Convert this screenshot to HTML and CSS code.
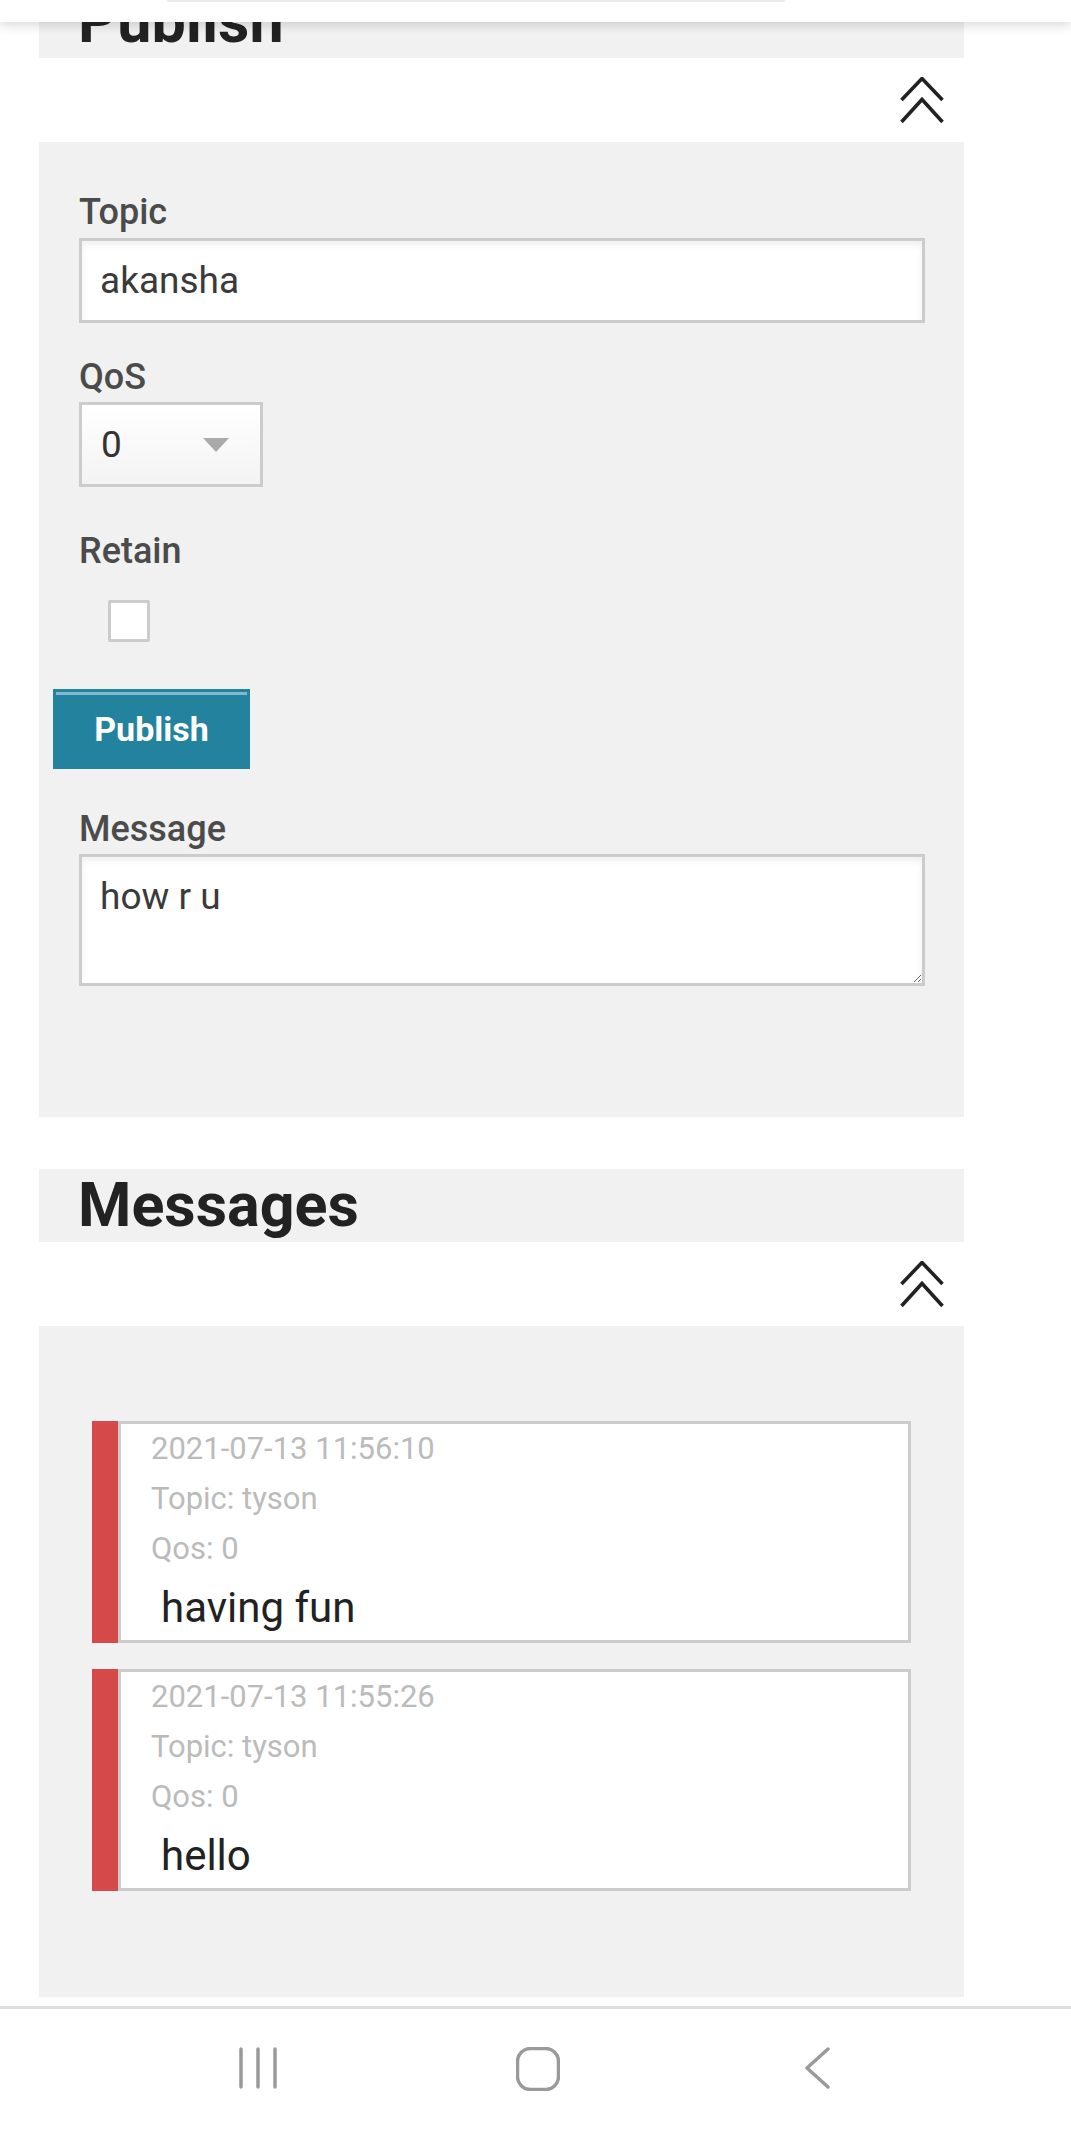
FILE: index.html
```html
<!DOCTYPE html>
<html lang="en">
<head>
<meta charset="utf-8">
<title>MQTT Client</title>
<link rel="stylesheet" href="styles.css">
</head>
<body>
<div class="topbar"><div class="topbar-edge"></div></div>

<main class="page">
  <section class="panel panel-first">
    <div class="panel-head"><h2>Publish</h2></div>
    <div class="collapse-row">
      <svg class="chev" width="44" height="46" viewBox="0 0 44 46"><polyline points="1.5,23 22,1.5 42.5,23" /><polyline points="1.5,45 22,22.5 42.5,45" /></svg>
    </div>
    <div class="panel-body publish-body">
      <label class="label">Topic</label>
      <input class="text-input" type="text" value="akansha">

      <label class="label label-qos">QoS</label>
      <div class="select"><span>0</span><svg width="26" height="14" viewBox="0 0 26 14"><polygon points="0,0 26,0 13,14" /></svg></div>

      <label class="label label-retain">Retain</label>
      <input class="check" type="checkbox">

      <button class="btn" type="button">Publish</button>

      <label class="label label-msg">Message</label>
      <textarea class="textarea">how r u</textarea>
    </div>
  </section>

  <section class="panel panel-msgs">
    <div class="panel-head"><h2>Messages</h2></div>
    <div class="collapse-row">
      <svg class="chev" width="44" height="46" viewBox="0 0 44 46"><polyline points="1.5,23 22,1.5 42.5,23" /><polyline points="1.5,45 22,22.5 42.5,45" /></svg>
    </div>
    <div class="panel-body msgs-body">
      <div class="msg">
        <div class="msg-bar"></div>
        <div class="msg-box">
          <div class="meta">2021-07-13 11:56:10</div>
          <div class="meta">Topic: tyson</div>
          <div class="meta">Qos: 0</div>
          <div class="msg-text">having fun</div>
        </div>
      </div>
      <div class="msg">
        <div class="msg-bar"></div>
        <div class="msg-box">
          <div class="meta">2021-07-13 11:55:26</div>
          <div class="meta">Topic: tyson</div>
          <div class="meta">Qos: 0</div>
          <div class="msg-text">hello</div>
        </div>
      </div>
    </div>
  </section>
</main>

<nav class="navbar">
  <div class="nav-slot">
    <svg width="40" height="42" viewBox="0 0 40 42"><line x1="3" y1="2" x2="3" y2="40" /><line x1="20" y1="2" x2="20" y2="40" /><line x1="37" y1="2" x2="37" y2="40" /></svg>
  </div>
  <div class="nav-slot">
    <svg width="44" height="44" viewBox="0 0 44 44"><rect x="1.5" y="1.5" width="41" height="41" rx="13" ry="13" /></svg>
  </div>
  <div class="nav-slot">
    <svg width="26" height="42" viewBox="0 0 26 42"><polyline points="23,2 2,21 23,40" /></svg>
  </div>
</nav>
</body>
</html>
```

FILE: styles.css
```css
* { box-sizing: border-box; }

html, body {
  margin: 0;
  padding: 0;
  background: #ffffff;
  font-family: Roboto, "Noto Sans", "Liberation Sans", sans-serif;
}

.topbar {
  position: fixed;
  top: 0;
  left: 0;
  right: 0;
  height: 22px;
  background: #ffffff;
  box-shadow: 0 3px 12px rgba(0, 0, 0, 0.16);
  z-index: 10;
}

.topbar-edge {
  margin-left: 167px;
  width: 618px;
  height: 2px;
  background: #ececec;
  border-radius: 0 0 4px 4px;
}

.page {
  padding: 0 107px 0 39px;
}

.panel-first {
  margin-top: -15px;
}

.panel-msgs {
  margin-top: 52px;
}

.panel-head {
  height: 73px;
  background: #f1f1f1;
  padding-left: 39px;
}

.panel-head h2 {
  margin: 0;
  font-size: 61px;
  line-height: 73px;
  font-weight: 700;
  color: #222222;
}

.collapse-row {
  height: 84px;
  display: flex;
  justify-content: flex-end;
  align-items: center;
  padding-right: 20px;
  background: #ffffff;
}

.chev polyline {
  fill: none;
  stroke: #222222;
  stroke-width: 3.6;
}

.panel-body {
  background: #f1f1f1;
}

.publish-body {
  padding: 49px 39px 131px 40px;
  display: flex;
  flex-direction: column;
  align-items: flex-start;
}

.label {
  display: block;
  font-size: 36px;
  line-height: 42px;
  font-weight: 500;
  color: #4b4b4b;
  margin: 0 0 5px 0;
}

.label-qos { margin-top: 33px; margin-bottom: 4px; }
.label-retain { margin-top: 43px; margin-bottom: 28px; }
.label-msg { margin-top: 39px; margin-bottom: 4px; }

.text-input {
  display: block;
  width: 100%;
  height: 85px;
  border: 3px solid #cccccc;
  border-radius: 0;
  padding: 0 18px;
  margin: 0;
  background: #ffffff;
  box-shadow: inset 0 4px 6px rgba(0, 0, 0, 0.06);
  font-family: Roboto, "Noto Sans", sans-serif;
  font-size: 37px;
  color: #3a3a3a;
  outline: none;
}

.select {
  width: 184px;
  height: 85px;
  border: 3px solid #cccccc;
  background: linear-gradient(#ffffff, #f3f3f3);
  display: flex;
  align-items: center;
  justify-content: space-between;
  padding: 0 31px 0 19px;
  font-size: 37px;
  color: #333333;
}

.select svg polygon {
  fill: #aaaaaa;
}

.check {
  appearance: none;
  -webkit-appearance: none;
  display: block;
  width: 42px;
  height: 42px;
  margin: 0 0 0 29px;
  border: 3px solid #cccccc;
  border-radius: 2px;
  background: #ffffff;
}

.btn {
  display: block;
  margin: 47px 0 0 -26px;
  width: 197px;
  height: 80px;
  padding: 0;
  border: 3px solid #23839f;
  border-radius: 0;
  background: #23839f;
  box-shadow: inset 0 3px 0 #7cbbcf;
  color: #ffffff;
  font-family: Roboto, "Noto Sans", sans-serif;
  font-size: 34px;
  font-weight: 700;
}

.textarea {
  display: block;
  width: 100%;
  height: 132px;
  border: 3px solid #cccccc;
  border-radius: 0;
  padding: 19px 18px;
  margin: 0;
  background: #ffffff;
  box-shadow: inset 0 4px 6px rgba(0, 0, 0, 0.06);
  font-family: Roboto, "Noto Sans", sans-serif;
  font-size: 37px;
  line-height: 42px;
  color: #3a3a3a;
  outline: none;
  resize: both;
}

.msgs-body {
  padding: 95px 53px 106px 53px;
  display: flex;
  flex-direction: column;
  gap: 26px;
}

.msg {
  display: flex;
}

.msg-bar {
  width: 26px;
  background: #d5494a;
  flex: none;
}

.msg-box {
  flex: 1;
  background: #ffffff;
  border: 3px solid #cccccc;
  padding: 0 0 9px 30px;
}

.meta {
  font-size: 31px;
  line-height: 50px;
  color: #bbbbbb;
}

.msg-text {
  margin-top: 10px;
  padding-left: 10px;
  font-size: 42px;
  line-height: 47px;
  color: #222222;
}

.navbar {
  position: fixed;
  left: 0;
  right: 0;
  bottom: 0;
  height: 126px;
  background: #ffffff;
  border-top: 3px solid #dedede;
  display: flex;
  justify-content: center;
  align-items: flex-start;
  padding: 38px 0 0 5px;
}

.nav-slot {
  width: 280px;
  display: flex;
  justify-content: center;
}

.navbar svg line,
.navbar svg rect,
.navbar svg polyline {
  fill: none;
  stroke: #9a9a9a;
  stroke-width: 3.5;
  stroke-linecap: round;
  stroke-linejoin: round;
}
```
